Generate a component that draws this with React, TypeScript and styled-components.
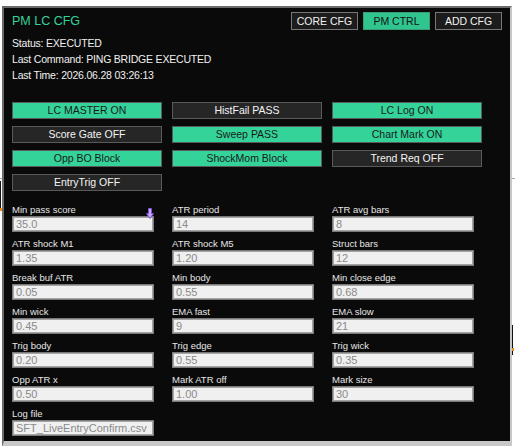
import React from 'react';
import styled, { createGlobalStyle } from 'styled-components';

const GlobalStyle = createGlobalStyle`
  html, body {
    margin: 0;
    padding: 0;
    background: #ffffff;
  }
  body {
    font-family: 'Liberation Sans', Arial, sans-serif;
  }
`;

const Page = styled.div`
  position: relative;
  width: 515px;
  height: 446px;
  overflow: hidden;
`;

// bits of the chart that peek out around the panel
const ChartLine = styled.div`
  position: absolute;
  left: 0;
  right: 0;
  top: 178px;
  height: 1px;
  background: #a8a8a8;
`;

const ChartTick = styled.div<{ $x: number; $y: number; $h: number; $color: string; $w?: number }>`
  position: absolute;
  left: ${p => p.$x}px;
  top: ${p => p.$y}px;
  width: ${p => p.$w ?? 1}px;
  height: ${p => p.$h}px;
  background: ${p => p.$color};
`;

const Panel = styled.div`
  position: relative;
  margin: 6px 0 0 2px;
  background: #0a0a0a;
  border-top: 2px solid #6b6b6b;
  border-left: 2px solid #6b6b6b;
  border-right: 2px solid #c8c8c8;
  border-bottom: 6px solid #c8c8c8;
  padding: 4px 8px 0 8px;
  box-sizing: content-box;
  width: 490px;
  height: 429px;
`;

const Header = styled.div`
  display: flex;
  align-items: center;
  justify-content: space-between;
  height: 18px;
`;

const Title = styled.div`
  color: #34d399;
  font-size: 12.5px;
  line-height: 18px;
`;

const Tabs = styled.div`
  display: flex;
  gap: 5px;
`;

const Tab = styled.div<{ $active?: boolean }>`
  width: 67px;
  height: 18px;
  box-sizing: border-box;
  border: 1px solid ${p => (p.$active ? '#3b9d78' : '#777777')};
  background: ${p => (p.$active ? '#30c58f' : '#1c1c1c')};
  color: ${p => (p.$active ? '#111111' : '#f2f2f2')};
  font-size: 10.5px;
  line-height: 16px;
  text-align: center;
`;

const Status = styled.div`
  margin-top: 5px;
  color: #f0f0f0;
  font-size: 10.5px;
  line-height: 16px;
  letter-spacing: -0.2px;
`;

const ToggleGrid = styled.div`
  margin-top: 19px;
  display: grid;
  grid-template-columns: repeat(3, 150px);
  column-gap: 10px;
  row-gap: 7px;
`;

const Toggle = styled.div<{ $on: boolean }>`
  height: 17px;
  box-sizing: border-box;
  border: 1px solid #5a5a5a;
  background: ${p => (p.$on ? '#34d399' : '#262626')};
  color: ${p => (p.$on ? '#1a1a1a' : '#f4f4f4')};
  font-size: 10.5px;
  line-height: 15px;
  text-align: center;
`;

const FieldGrid = styled.div`
  margin-top: 13px;
  display: grid;
  grid-template-columns: repeat(3, 142px);
  column-gap: 18px;
  row-gap: 6px;
`;

const Field = styled.div`
  position: relative;
  display: flex;
  flex-direction: column;
`;

const Label = styled.div`
  color: #e6e6e6;
  font-size: 9.5px;
  line-height: 12px;
  height: 12px;
  white-space: nowrap;
`;

const Value = styled.input`
  width: 142px;
  height: 16px;
  box-sizing: border-box;
  margin: 0;
  padding: 0 3px;
  border: 1px solid #7a7a7a;
  box-shadow: inset 0 0 0 1px #a4a4a4;
  background: #f0f0f0;
  color: #8a8a8a;
  font-family: 'Liberation Sans', Arial, sans-serif;
  font-size: 11px;
  line-height: 14px;
  outline: none;
`;

const Cursor = styled.svg`
  position: absolute;
  right: 0;
  top: 4px;
  width: 8px;
  height: 11px;
`;

const toggles = [
  { label: 'LC MASTER ON', on: true },
  { label: 'HistFail PASS', on: false },
  { label: 'LC Log ON', on: true },
  { label: 'Score Gate OFF', on: false },
  { label: 'Sweep PASS', on: true },
  { label: 'Chart Mark ON', on: true },
  { label: 'Opp BO Block', on: true },
  { label: 'ShockMom Block', on: true },
  { label: 'Trend Req OFF', on: false },
  { label: 'EntryTrig OFF', on: false },
];

const fields = [
  { label: 'Min pass score', value: '35.0' },
  { label: 'ATR period', value: '14' },
  { label: 'ATR avg bars', value: '8' },
  { label: 'ATR shock M1', value: '1.35' },
  { label: 'ATR shock M5', value: '1.20' },
  { label: 'Struct bars', value: '12' },
  { label: 'Break buf ATR', value: '0.05' },
  { label: 'Min body', value: '0.55' },
  { label: 'Min close edge', value: '0.68' },
  { label: 'Min wick', value: '0.45' },
  { label: 'EMA fast', value: '9' },
  { label: 'EMA slow', value: '21' },
  { label: 'Trig body', value: '0.20' },
  { label: 'Trig edge', value: '0.55' },
  { label: 'Trig wick', value: '0.35' },
  { label: 'Opp ATR x', value: '0.50' },
  { label: 'Mark ATR off', value: '1.00' },
  { label: 'Mark size', value: '30' },
  { label: 'Log file', value: 'SFT_LiveEntryConfirm.csv' },
];

const App: React.FC = () => {
  return (
    <Page>
      <GlobalStyle />
      <ChartLine />
      <ChartTick $x={0} $y={181} $h={30} $color="#111111" />
      <ChartTick $x={0} $y={208} $h={3} $w={2} $color="#f08a1c" />
      <ChartTick $x={512} $y={325} $h={30} $color="#111111" />
      <ChartTick $x={512} $y={348} $h={3} $w={2} $color="#f08a1c" />

      <Panel>
        <Header>
          <Title>PM LC CFG</Title>
          <Tabs>
            <Tab>CORE CFG</Tab>
            <Tab $active>PM CTRL</Tab>
            <Tab>ADD CFG</Tab>
          </Tabs>
        </Header>

        <Status>
          <div>Status: EXECUTED</div>
          <div>Last Command: PING BRIDGE EXECUTED</div>
          <div>Last Time: 2026.06.28 03:26:13</div>
        </Status>

        <ToggleGrid>
          {toggles.map(t => (
            <Toggle key={t.label} $on={t.on}>
              {t.label}
            </Toggle>
          ))}
        </ToggleGrid>

        <FieldGrid>
          {fields.map((f, i) => (
            <Field key={f.label}>
              <Label>{f.label}</Label>
              <Value readOnly value={f.value} />
              {i === 0 && (
                <Cursor viewBox="0 0 8 11">
                  <path d="M2.5 0.5 H5.5 V5.5 H7.5 L4 10.5 L0.5 5.5 H2.5 Z" fill="#c9a6ff" stroke="#7b4fd6" strokeWidth="1" />
                </Cursor>
              )}
            </Field>
          ))}
        </FieldGrid>
      </Panel>
    </Page>
  );
};

export default App;
